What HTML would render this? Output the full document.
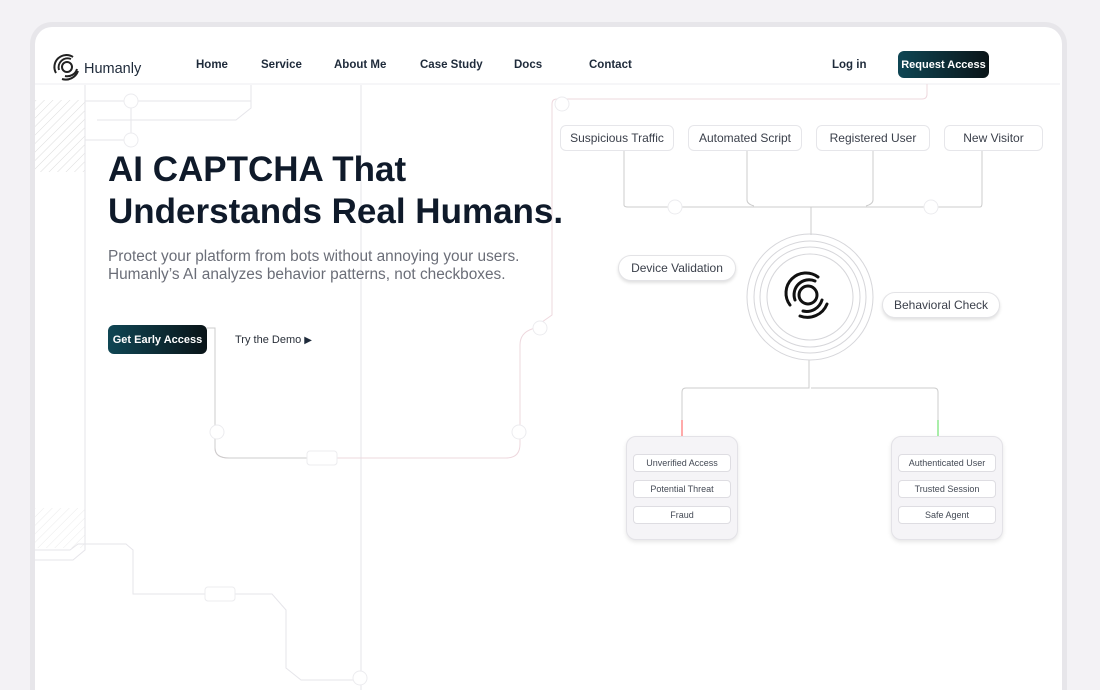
<!DOCTYPE html>
<html><head><meta charset="utf-8"><style>
*{margin:0;padding:0;box-sizing:border-box}
html,body{width:1100px;height:690px;overflow:hidden}
body{background:#f3f2f5;font-family:"Liberation Sans",sans-serif;position:relative}
.card{position:absolute;left:30px;top:22px;width:1037px;height:668px;border:5px solid #e7e6ea;border-bottom:0;border-radius:22px 22px 0 0;background:#fff;overflow:hidden}
.abs{position:absolute}
.nav a{position:absolute;top:59px;font-size:11.5px;font-weight:bold;color:#1e2a3a;text-decoration:none}
.pill{position:absolute;height:26px;border:1px solid #e6e6ea;border-radius:6px;background:#fff;font-size:12px;color:#3a3f4a;line-height:24px;text-align:center}
.rp{position:absolute;height:26px;border:1px solid #e3e3e6;border-radius:14px;background:#fff;font-size:12px;color:#3a3f4a;line-height:24px;text-align:center;box-shadow:0 2px 3px rgba(0,0,0,.12)}
.box{position:absolute;width:112px;height:104px;border:1px solid #e3e2e7;border-radius:10px;background:#f5f4f7;box-shadow:0 2px 4px rgba(0,0,0,.1)}
.box div{position:absolute;left:6px;width:98px;height:18px;border:1px solid #dedde2;border-radius:4px;background:#fff;font-size:9px;color:#444a55;text-align:center;line-height:16px}
.btn{position:absolute;background:linear-gradient(90deg,#0f4654,#0a1418);color:#fff;font-weight:bold;border-radius:6px;text-align:center}
</style></head><body>
<div class="card"></div>
<svg class="abs" style="left:0;top:0" width="1100" height="690">
<defs><pattern id="h" width="6" height="6" patternUnits="userSpaceOnUse" patternTransform="rotate(45)"><line x1="0" y1="0" x2="0" y2="6" stroke="#ddd" stroke-width="1"/></pattern></defs>
<line x1="35" y1="84" x2="1060" y2="84" stroke="#eeedf1"/>
<rect x="35" y="100" width="50" height="72" fill="url(#h)"/>
<rect x="35" y="508" width="50" height="40" fill="url(#h)" opacity=".6"/>
<g fill="none" stroke="#e6e5ea" stroke-width="1">
<path d="M85 85V550L73 560H35"/><path d="M35 550H70L78 544H126L133 550V594H272L286 610V668L301 680H360"/>
<path d="M85 101H251V85M251 85V108L236 120H97"/><path d="M85 140H131"/><path d="M131 101V140"/>
<line x1="361" y1="85" x2="361" y2="690"/>
</g>
<g fill="none" stroke="#ccc" stroke-width="1">
<path d="M207 328h8v120q0 10 14 10H506q14 0 14 -14V345q0-12 12-16l20-14V104q0-5 5-5h365q5 0 5-5v-10" stroke="#eed8de"/>
<path d="M207 328h8v120q0 10 14 10H330"/>
<path d="M624 150V205q0 2 4 2H980q2 0 2-4V150M747 150V200q0 4 7 6M873 150V200q0 4-7 6M811 207V235M809 360v28H686q-4 0-4 4v42M811 388H934q4 0 4 4v42"/>
</g>
<line x1="682" y1="420" x2="682" y2="436" stroke="#f55" /><line x1="938" y1="420" x2="938" y2="436" stroke="#5d5"/>
<g fill="#fff" stroke="#ececef">
<circle cx="131" cy="101" r="7"/><circle cx="131" cy="140" r="7"/><circle cx="217" cy="432" r="7"/><circle cx="519" cy="432" r="7"/><circle cx="540" cy="328" r="7"/><circle cx="562" cy="104" r="7"/><circle cx="675" cy="207" r="7"/><circle cx="931" cy="207" r="7"/><circle cx="360" cy="678" r="7"/>
<rect x="307" y="451" width="30" height="14" rx="3"/><rect x="205" y="587" width="30" height="14" rx="3"/>
</g>
<g fill="none" stroke="#d6d6da">
<circle cx="810" cy="297" r="63"/><circle cx="810" cy="297" r="56"/><circle cx="810" cy="297" r="50"/><circle cx="810" cy="297" r="43"/>
</g>
<g fill="none" stroke="#111" stroke-width="3" stroke-linecap="round">
<circle cx="808" cy="295" r="9"/><path d="M795 300a15 15 0 0 1 20-19"/><path d="M790 305a20 20 0 0 1 28-28"/><path d="M803 311a16 16 0 0 0 19-11"/><path d="M800 316a21 21 0 0 0 27-12"/>
</g>
<g fill="none" stroke="#222" stroke-width="2">
<circle cx="67" cy="67" r="5"/><path d="M59 70a9 9 0 0 1 12-11M56 73a12 12 0 0 1 17-16M65 76a10 10 0 0 0 12-7M62 79a13 13 0 0 0 16-8"/>
</g>
</svg>
<div class="abs" style="left:84px;top:61px;font-size:14.5px;color:#1e2a3a">Humanly</div>
<div class="nav"><a style="left:196px">Home</a><a style="left:261px">Service</a><a style="left:334px">About Me</a><a style="left:420px">Case Study</a><a style="left:514px">Docs</a><a style="left:589px">Contact</a><a style="left:832px">Log in</a></div>
<div class="btn" style="left:898px;top:51px;width:91px;height:27px;font-size:11px;line-height:29px">Request Access</div>
<div class="abs" style="left:108px;top:149px;font-size:35px;font-weight:bold;color:#0f1a2a;line-height:42px">AI CAPTCHA That<br>Understands Real Humans.</div>
<div class="abs" style="left:108px;top:248px;font-size:15.4px;color:#6b6e78;line-height:18px">Protect your platform from bots without annoying your users.<br>Humanly’s AI analyzes behavior patterns, not checkboxes.</div>
<div class="btn" style="left:108px;top:325px;width:99px;height:29px;font-size:11px;line-height:31px">Get Early Access</div>
<div class="abs" style="left:235px;top:334px;font-size:11px;color:#2a303a">Try the Demo <span style="color:#1e2a3a;font-size:10px">▶</span></div>
<div class="pill" style="left:560px;top:125px;width:114px">Suspicious Traffic</div>
<div class="pill" style="left:688px;top:125px;width:114px">Automated Script</div>
<div class="pill" style="left:816px;top:125px;width:114px">Registered User</div>
<div class="pill" style="left:944px;top:125px;width:99px">New Visitor</div>
<div class="rp" style="left:618px;top:255px;width:118px">Device Validation</div>
<div class="rp" style="left:882px;top:292px;width:118px">Behavioral Check</div>
<div class="box" style="left:626px;top:436px"><div style="top:17px">Unverified Access</div><div style="top:43px">Potential Threat</div><div style="top:69px">Fraud</div></div>
<div class="box" style="left:891px;top:436px"><div style="top:17px">Authenticated User</div><div style="top:43px">Trusted Session</div><div style="top:69px">Safe Agent</div></div>
</body></html>
